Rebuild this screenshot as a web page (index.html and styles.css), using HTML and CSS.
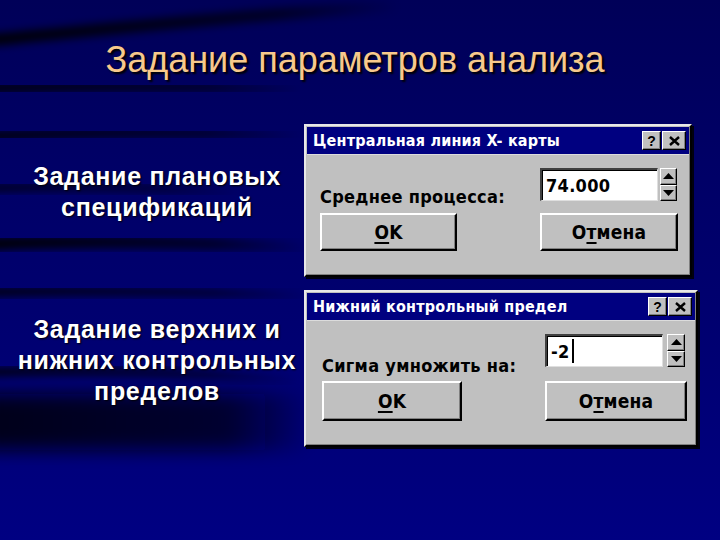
FILE: index.html
```html
<!DOCTYPE html>
<html lang="ru">
<head>
<meta charset="utf-8">
<title>Задание параметров анализа</title>
<link rel="stylesheet" href="styles.css">
</head>
<body>
<div class="slide">
  <svg class="backdrop" width="720" height="540" viewBox="0 0 720 540" aria-hidden="true">
    <defs>
      <filter id="blur" x="-20%" y="-50%" width="140%" height="200%"><feGaussianBlur stdDeviation="4"/></filter>
      <filter id="blur2" x="-20%" y="-50%" width="140%" height="200%"><feGaussianBlur stdDeviation="9"/></filter>
      <linearGradient id="fadeR" x1="0" y1="0" x2="1" y2="0">
        <stop offset="0" stop-color="#000" stop-opacity="0.95"/>
        <stop offset="0.7" stop-color="#000" stop-opacity="0.6"/>
        <stop offset="1" stop-color="#000" stop-opacity="0"/>
      </linearGradient>
      <linearGradient id="fadeL" x1="0" y1="0" x2="1" y2="0">
        <stop offset="0" stop-color="#000010" stop-opacity="0.9"/>
        <stop offset="0.75" stop-color="#000010" stop-opacity="0.7"/>
        <stop offset="1" stop-color="#000010" stop-opacity="0"/>
      </linearGradient>
    </defs>
    <path d="M-10 40 C 100 30, 250 14, 400 6" stroke="url(#fadeR)" stroke-width="12" fill="none" filter="url(#blur)"/>
    <path d="M-10 88 C 100 86, 200 86, 300 90" stroke="url(#fadeR)" stroke-width="9" fill="none" filter="url(#blur)"/>
    <path d="M-10 136 C 100 132, 200 132, 300 136" stroke="url(#fadeR)" stroke-width="9" fill="none" filter="url(#blur)"/>
    <path d="M-10 188 C 80 186, 160 188, 240 192" stroke="url(#fadeR)" stroke-width="6" fill="none" filter="url(#blur)"/>
    <path d="M-10 244 C 100 240, 200 242, 310 248" stroke="url(#fadeR)" stroke-width="13" fill="none" filter="url(#blur)"/>
    <path d="M-10 292 C 100 290, 200 292, 310 296" stroke="url(#fadeR)" stroke-width="8" fill="none" filter="url(#blur)"/>
    <path d="M-10 372 C 80 370, 200 372, 300 380" stroke="url(#fadeR)" stroke-width="8" fill="none" filter="url(#blur)"/>
    <rect x="-20" y="394" width="330" height="56" fill="url(#fadeL)" filter="url(#blur2)"/>
    <path d="M700 132 L 730 132" stroke="#2a5cff" stroke-width="8" fill="none" filter="url(#blur)"/>
    <path d="M705 530 L 730 530" stroke="#3a6cff" stroke-width="10" fill="none" filter="url(#blur)"/>
  </svg>

  <h1 class="slide-title">Задание параметров анализа</h1>

  <div class="rows">
    <section class="row row-first">
      <p class="caption">Задание плановых<br>спецификаций</p>
      <div class="dialog dialog-first">
        <div class="titlebar">
          <span class="title-text">Центральная линия X- карты</span>
          <span class="title-buttons">
            <span class="tbtn tbtn-help">?</span>
            <span class="tbtn tbtn-close">
              <svg width="11" height="10" viewBox="0 0 11 10"><path d="M1 1 L10 9 M10 1 L1 9" stroke="#000" stroke-width="2.4" fill="none"/></svg>
            </span>
          </span>
        </div>
        <div class="dlg-body">
          <span class="label">Среднее процесса:</span>
          <div class="field">
            <div class="input">74.000</div>
            <div class="spin">
              <span class="spin-btn"><svg width="11" height="6" viewBox="0 0 11 6"><path d="M0 6 L5.5 0 L11 6 Z" fill="#000"/></svg></span>
              <span class="spin-btn"><svg width="11" height="6" viewBox="0 0 11 6"><path d="M0 0 L5.5 6 L11 0 Z" fill="#000"/></svg></span>
            </div>
          </div>
          <span class="btn btn-ok"><u>O</u>K</span>
          <span class="btn btn-cancel">О<u>т</u>мена</span>
        </div>
      </div>
    </section>

    <section class="row row-second">
      <p class="caption">Задание верхних и<br>нижних контрольных<br>пределов</p>
      <div class="dialog dialog-second">
        <div class="titlebar">
          <span class="title-text">Нижний контрольный предел</span>
          <span class="title-buttons">
            <span class="tbtn tbtn-help">?</span>
            <span class="tbtn tbtn-close">
              <svg width="11" height="10" viewBox="0 0 11 10"><path d="M1 1 L10 9 M10 1 L1 9" stroke="#000" stroke-width="2.4" fill="none"/></svg>
            </span>
          </span>
        </div>
        <div class="dlg-body">
          <span class="label">Сигма умножить на:</span>
          <div class="field">
            <div class="input">-2<span class="caret"></span></div>
            <div class="spin">
              <span class="spin-btn"><svg width="11" height="6" viewBox="0 0 11 6"><path d="M0 6 L5.5 0 L11 6 Z" fill="#000"/></svg></span>
              <span class="spin-btn"><svg width="11" height="6" viewBox="0 0 11 6"><path d="M0 0 L5.5 6 L11 0 Z" fill="#000"/></svg></span>
            </div>
          </div>
          <span class="btn btn-ok"><u>O</u>K</span>
          <span class="btn btn-cancel">О<u>т</u>мена</span>
        </div>
      </div>
    </section>
  </div>
</div>
</body>
</html>
```

FILE: styles.css
```css
* { box-sizing: border-box; }

html, body {
  margin: 0;
  padding: 0;
  background: #00006c;
}

.slide {
  position: relative;
  width: 720px;
  height: 540px;
  overflow: hidden;
  background: linear-gradient(180deg, #000058 0%, #000066 30%, #000070 60%, #000082 100%);
  font-family: "Liberation Sans", Arial, sans-serif;
}

.backdrop {
  position: absolute;
  left: 0;
  top: 0;
  z-index: 0;
}

.slide-title {
  position: relative;
  z-index: 1;
  margin: 0;
  padding: 40px 10px 0 0;
  height: 124px;
  text-align: center;
  font-weight: normal;
  font-size: 36px;
  line-height: 40px;
  color: #f7c98c;
  text-shadow: 2px 2px 2px #000;
}

.rows {
  position: relative;
  z-index: 1;
  display: flex;
  flex-direction: column;
  gap: 13px;
}

.row {
  display: flex;
  align-items: flex-start;
}

.caption {
  width: 304px;
  margin: 0;
  padding-left: 10px;
  text-align: center;
  color: #fff;
  font-weight: bold;
  font-size: 25px;
  line-height: 31px;
  letter-spacing: 0.7px;
  text-shadow: 1px 1px 2px #000;
}

.row-first .caption { padding-top: 37px; }
.row-second .caption { padding-top: 24px; }

/* Windows-95 style dialog */
.dialog {
  background: #c0c0c0;
  border-top: 2px solid #e8e8e8;
  border-left: 2px solid #e8e8e8;
  border-right: 2px solid #000;
  border-bottom: 2px solid #000;
  box-shadow: inset -1px -1px 0 #808080, 2px 2px 0 #000010;
  font-family: "DejaVu Sans Condensed", "DejaVu Sans", sans-serif;
  font-stretch: condensed;
  font-weight: bold;
  color: #000;
}

.dialog-first { width: 388px; height: 153px; }
.dialog-second { width: 394px; height: 157px; }

.titlebar {
  height: 28px;
  background: #000080;
  display: flex;
  align-items: center;
  justify-content: space-between;
  padding: 0 3px 0 6px;
  margin: 1px 1px 0 1px;
  border-bottom: 1px solid #dcdcdc;
}

.title-text {
  color: #fff;
  font-size: 16px;
  letter-spacing: 0.2px;
}

.title-buttons {
  display: flex;
  gap: 1px;
}

.tbtn {
  height: 19px;
  background: #c0c0c0;
  border-top: 1px solid #fff;
  border-left: 1px solid #fff;
  border-right: 1px solid #000;
  border-bottom: 1px solid #000;
  box-shadow: inset -1px -1px 0 #808080;
  display: flex;
  align-items: center;
  justify-content: center;
  font-family: "Liberation Sans", Arial, sans-serif;
  font-weight: bold;
  font-size: 14px;
  line-height: 1;
}

.tbtn-help { width: 19px; }
.tbtn-close { width: 24px; }

.dlg-body {
  display: grid;
  align-items: end;
}

.dialog-first .dlg-body {
  grid-template-columns: 137px 83px 138px;
  row-gap: 12px;
  padding: 13px 0 0 14px;
}

.dialog-second .dlg-body {
  grid-template-columns: 140px 83px 142px;
  row-gap: 14px;
  padding: 13px 0 0 16px;
}

.label {
  grid-column: 1 / 3;
  grid-row: 1;
  font-size: 18px;
  line-height: 20px;
  margin-bottom: -6px;
  white-space: nowrap;
  letter-spacing: 0.3px;
}

.dialog-second .label { margin-bottom: -9px; }

.field {
  grid-column: 3;
  grid-row: 1;
  display: flex;
  gap: 2px;
  height: 33px;
}

.dialog-second .field { gap: 4px; }

.input {
  width: 118px;
  height: 33px;
  background: #fff;
  border-top: 2px solid #404040;
  border-left: 2px solid #404040;
  border-right: 1px solid #dfdfdf;
  border-bottom: 1px solid #dfdfdf;
  box-shadow: inset 1px 1px 0 #000;
  display: flex;
  align-items: center;
  padding-left: 4px;
  font-size: 18px;
  letter-spacing: 0.3px;
}

.caret {
  display: inline-block;
  width: 2px;
  height: 24px;
  background: #000;
  margin-left: 2px;
}

.spin {
  display: flex;
  flex-direction: column;
  width: 17px;
}

.dialog-second .spin { width: 18px; }

.spin-btn {
  flex: 1;
  background: #c0c0c0;
  border-top: 1px solid #fff;
  border-left: 1px solid #fff;
  border-right: 1px solid #000;
  border-bottom: 1px solid #000;
  box-shadow: inset -1px -1px 0 #808080;
  display: flex;
  align-items: center;
  justify-content: center;
}

.btn {
  grid-row: 2;
  height: 38px;
  background: #c0c0c0;
  border-top: 2px solid #fff;
  border-left: 2px solid #fff;
  border-right: 2px solid #000;
  border-bottom: 2px solid #000;
  box-shadow: inset -1px -1px 0 #808080;
  display: flex;
  align-items: center;
  justify-content: center;
  font-size: 19px;
  letter-spacing: 0.2px;
}

.dialog-second .btn { height: 40px; }

.btn u {
  text-decoration-thickness: 2px;
  text-underline-offset: 3px;
}

.btn-ok { grid-column: 1; }
.btn-cancel { grid-column: 3; }
```
